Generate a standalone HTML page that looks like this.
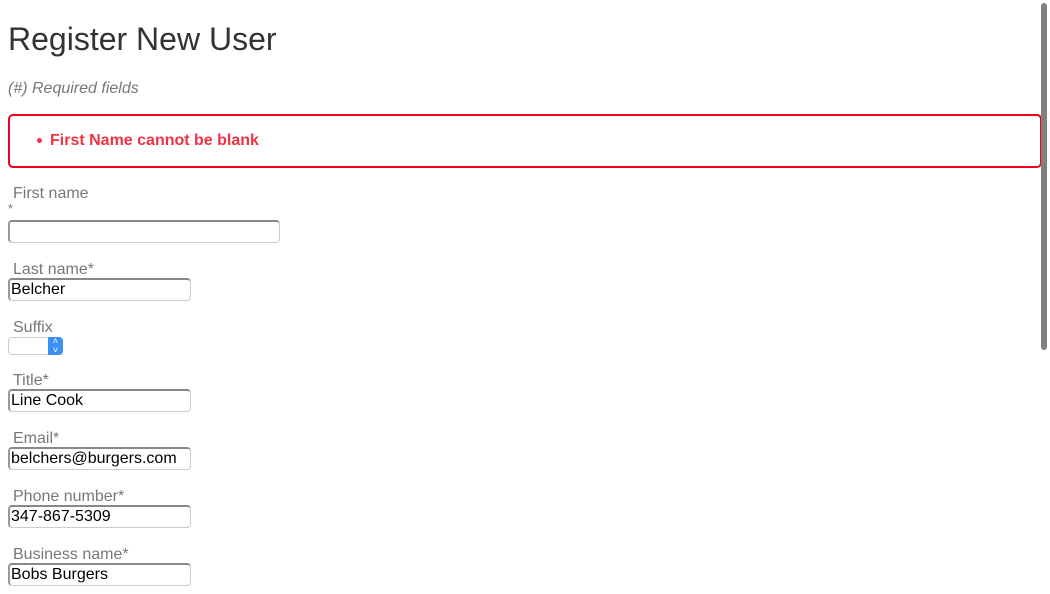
<!DOCTYPE html>
<html><head><style>
body{margin:0;width:1050px;height:594px;overflow:hidden;background:#fff;font-family:"Liberation Sans",Arial,sans-serif;position:relative}
.a{position:absolute;white-space:nowrap}
h1{position:absolute;left:8px;top:21px;margin:0;font-size:32px;font-weight:normal;color:#333}
.req{left:8px;top:80px;font-size:16px;font-style:italic;color:#777}
.err{position:absolute;left:8px;top:114px;border:2px solid #f0001a;border-radius:5px;box-sizing:border-box;width:1034px;height:54px}
.err span{position:absolute;left:40px;top:16px;font-size:16px;font-weight:bold;color:#ee3344}
.err i{position:absolute;left:27px;top:22px;width:5px;height:5px;border-radius:50%;background:#ee3344}
.lb{left:13px;font-size:16px;color:#777}
.in{position:absolute;left:8px;height:23px;box-sizing:border-box;border:1px solid #ccc;border-top:2px solid #888;border-left:2px solid #999;border-radius:4px;font-size:16px;color:#000;padding:1px 0 0 1px;line-height:18px}
.sb{position:absolute;left:1041px;top:3px;width:6px;height:347px;border-radius:3px;background:#808080}
</style></head><body>
<h1>Register New User</h1>
<div class="a req">(#) Required fields</div>
<div class="err"><i></i><span>First Name cannot be blank</span></div>
<div class="a lb" style="top:185px">First name</div>
<div class="a" style="left:8px;top:201px;font-size:13px;color:#777">*</div>
<div class="in" style="top:220px;width:272px"></div>
<div class="a lb" style="top:261px">Last name*</div>
<div class="in" style="top:278px;width:183px">Belcher</div>
<div class="a lb" style="top:319px">Suffix</div>
<div style="position:absolute;left:8px;top:337px;width:55px;height:18px;border:1px solid #ccc;border-radius:4px;box-sizing:border-box"></div>
<div style="position:absolute;left:48px;top:337px;width:15px;height:18px;background:#3c8ff5;border-radius:0 4px 4px 0;color:#fff;font-size:9px;text-align:center;line-height:9px">˄<br>˅</div>
<div class="a lb" style="top:372px">Title*</div>
<div class="in" style="top:389px;width:183px">Line Cook</div>
<div class="a lb" style="top:430px">Email*</div>
<div class="in" style="top:447px;width:183px">belchers@burgers.com</div>
<div class="a lb" style="top:488px">Phone number*</div>
<div class="in" style="top:505px;width:183px">347-867-5309</div>
<div class="a lb" style="top:546px">Business name*</div>
<div class="in" style="top:563px;width:183px">Bobs Burgers</div>
<div class="sb"></div>
</body></html>
